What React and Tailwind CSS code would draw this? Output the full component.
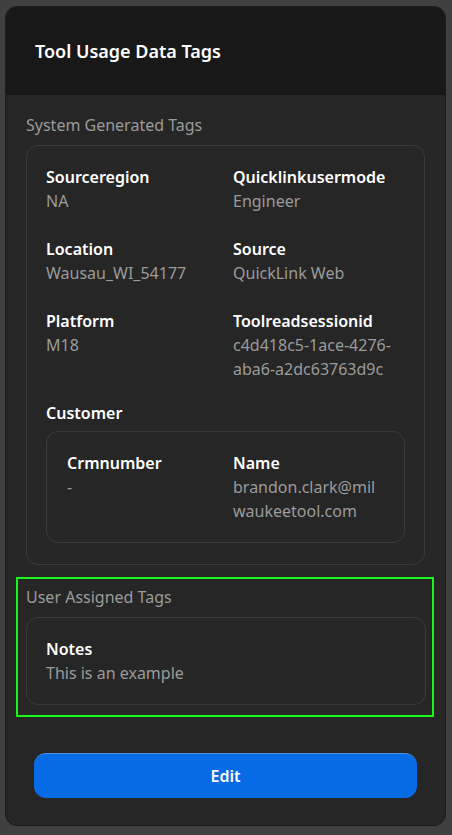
import React from "react";

const systemTags = [
  { label: "Sourceregion", value: "NA" },
  { label: "Quicklinkusermode", value: "Engineer" },
  { label: "Location", value: "Wausau_WI_54177" },
  { label: "Source", value: "QuickLink Web" },
  { label: "Platform", value: "M18" },
  { label: "Toolreadsessionid", value: "c4d418c5-1ace-4276-aba6-a2dc63763d9c" },
];

const Tag = ({ label, value }) => (
  <div className="min-w-0">
    <div className="font-semibold text-white leading-6">{label}</div>
    <div className="text-[#9b9b9b] leading-6 break-words">{value}</div>
  </div>
);

const App = () => {
  return (
    <div
      className="min-h-[835px] bg-[#404040] pt-[6px] pl-[5px] pr-[6px] pb-[9px]"
      style={{ fontFamily: '"Noto Sans", "Open Sans", sans-serif' }}
    >
      <div className="h-[820px] rounded-xl border border-[#1c1c1c] bg-[#262626] overflow-hidden flex flex-col text-base">
        {/* Header */}
        <div className="h-[88px] bg-[#181818] flex items-center px-[29px] shrink-0">
          <h2 className="text-[18px] font-semibold text-white">Tool Usage Data Tags</h2>
        </div>

        {/* Body */}
        <div className="px-[20px] pt-[18px]">
          <div className="text-[#9b9b9b] leading-6 mb-[8px]">System Generated Tags</div>
          <div className="rounded-xl border border-[#3a3a3a] px-[19px] pt-[19px] pb-[21px]">
            <div className="grid grid-cols-[175px_1fr] gap-x-[12px] gap-y-[24px]">
              {systemTags.map((t) => (
                <Tag key={t.label} label={t.label} value={t.value} />
              ))}
            </div>
            <div className="mt-[20px]">
              <div className="font-semibold text-white leading-6">Customer</div>
              <div className="mt-[6px] rounded-xl border border-[#3a3a3a] px-[20px] pt-[19px] pb-[19px] grid grid-cols-[166px_1fr]">
                <Tag label="Crmnumber" value="-" />
                <Tag label="Name" value="brandon.clark@milwaukeetool.com" />
              </div>
            </div>
          </div>
        </div>

        {/* User tags */}
        <div className="ml-[10px] mr-[11px] mt-[12px] border-2 border-[#19f719] pl-[8px] pr-[6px] pt-[6px] pb-[10px]">
          <div className="text-[#9b9b9b] leading-6 mb-[8px]">User Assigned Tags</div>
          <div className="rounded-xl border border-[#3a3a3a] px-[19px] pt-[19px] pb-[19px]">
            <Tag label="Notes" value="This is an example" />
          </div>
        </div>

        <div className="mt-auto px-[28px] pb-[27px]">
          <button className="w-full h-[45px] rounded-xl bg-[#076be6] border-t border-[#4c90ea] text-white font-semibold">
            Edit
          </button>
        </div>
      </div>
    </div>
  );
};

export default App;
